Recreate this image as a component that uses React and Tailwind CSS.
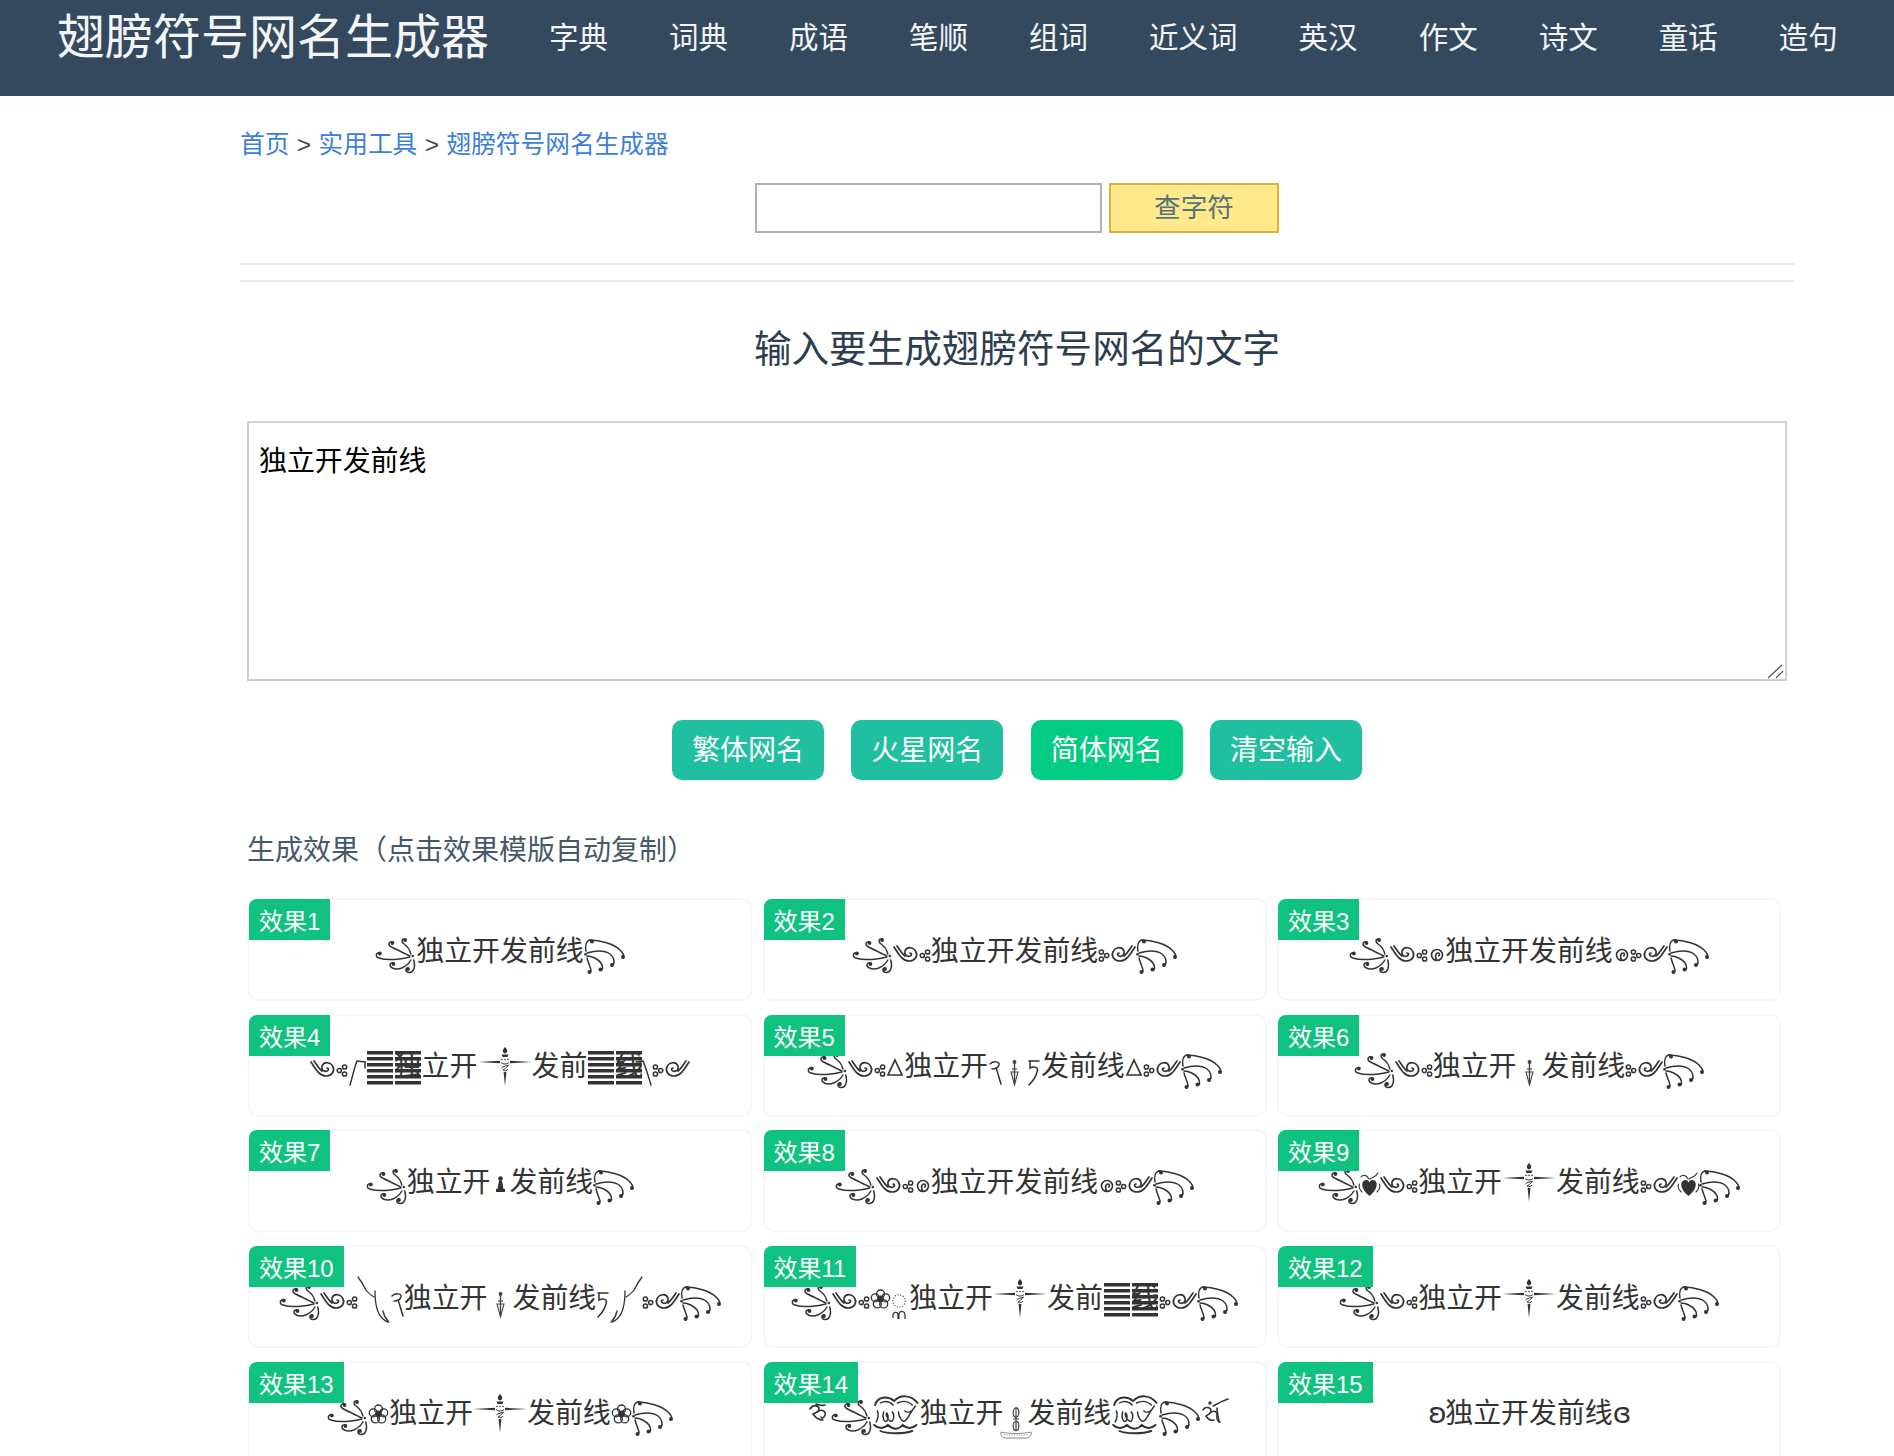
const navItems = ["字典", "词典", "成语", "笔顺", "组词", "近义词", "英汉", "作文", "诗文", "童话", "造句"];

const Wing = () => (
  <g fill="none" stroke="#333" strokeWidth="1.5" strokeLinecap="round" transform="scale(0.97 1)">
    <path d="M6 1 C2 0 1 5 5 6 C14 9 28 7 37 5" />
    <path d="M19 -10 C15 -11 14 -7 18 -5 C24 -2 31 1 37 4" />
    <path d="M32 -13 C28 -13 28 -10 31 -8 C34 -6 37 -2 38 2" />
    <path d="M38 8 C34 15 25 19 19 16 C15 14 16 10 20 11" />
    <path d="M41 8 C43 15 41 21 36 20.5 C32 20 32 16 35 16" />
    <g fill="#333" stroke="none">
      <circle cx="6" cy="1.5" r="2" />
      <circle cx="19" cy="-9" r="2" />
      <circle cx="32" cy="-12" r="2" />
      <circle cx="20" cy="12" r="2" />
      <circle cx="35" cy="17" r="2" />
      <circle cx="40" cy="4" r="1.3" />
    </g>
  </g>
);

// the right wing is not a mirror of the left one: its long stroke arches over the top
const WingR = () => (
  <g fill="none" stroke="#333" strokeWidth="1.5" strokeLinecap="round">
    <path d="M2 -1 C1 -6 2 -11 6 -12 C8 -12.5 9 -11 8 -10" />
    <path d="M6 -12 C16 -12 30 -8 36 -2 C39 1 41 4 39 6" />
    <path d="M3 1 C10 -1 20 -2 26 2 C30 5 31 10 29 13" />
    <path d="M3 4 C8 4 14 7 17 11 C19 14 19 18 17 18" />
    <path d="M3 6 C4 10 6 14 7 18 C7 20 6 21 5 20" />
    <g fill="#333" stroke="none">
      <circle cx="8" cy="-10.5" r="2" />
      <circle cx="39" cy="5" r="2" />
      <circle cx="28" cy="13" r="2" />
      <circle cx="16.5" cy="17.5" r="2" />
      <circle cx="5.5" cy="20" r="2" />
      <circle cx="1.5" cy="2.3" r="1.3" />
    </g>
  </g>
);

const Swirl = () => (
  <g fill="none" stroke="#333" strokeWidth="1.7" strokeLinecap="round">
    <path d="M1 -5 C5 1 9 9 16 9 C22 9 25 4 23 0 C21 -5 14 -6 12 -1 C11 3 14 5 17 4 C19 3 19 1 17 1" />
    <path d="M4 -6 C7 -2 9 2 12 4" />
  </g>
);

const Dots = () => (
  <g fill="none" stroke="#333" strokeWidth="1.5">
    <circle cx="3.3" cy="3.5" r="2.1" />
    <circle cx="8.6" cy="0" r="2.1" />
    <circle cx="8.6" cy="7" r="2.1" />
  </g>
);

const Ring = () => (
  <g fill="none" stroke="#333" strokeWidth="1.6">
    <circle cx="9" cy="3" r="5.5" />
    <path d="M9 8.5 C7 6 7 1 10 1 C12 1 12 4 10 4" />
  </g>
);

const Cross = () => (
  <g fill="#333" stroke="none">
    <path d="M0 -5 L22 -6.2 L22 -3.8 Z" />
    <path d="M54 -5 L32 -6.2 L32 -3.8 Z" />
    <path d="M25.6 5 L27 19 L28.4 5 Z" />
    <path d="M27 -20 C29.5 -17 30.5 -15 27 -13.5 C23.5 -15 24.5 -17 27 -20 Z" />
    <path d="M23.5 -12.5 H30.5 L29.5 -10 H24.5 Z" />
    <circle cx="24" cy="-7.5" r="0.8" />
    <circle cx="27" cy="-7.5" r="0.8" />
    <circle cx="30" cy="-7.5" r="0.8" />
    <g fill="none" stroke="#333" strokeWidth="1">
      <path d="M23 -4.5 C25 -2.5 29 -2.5 31 -4.5" />
      <path d="M23.5 1 C25 -1 29 -1 30.5 -2 C28 1 26 3 25 3 C27 4.5 29 3.5 30 2" />
    </g>
  </g>
);

const Dagger = () => (
  <g fill="none" stroke="#444" strokeWidth="1.1">
    <circle cx="12.5" cy="-5" r="1.4" fill="#444" />
    <path d="M12.5 -4 V17" strokeWidth="1.4" />
    <path d="M9 5 H16 L12.5 18 Z" />
    <path d="M10 2 H15" />
  </g>
);

const Hex = () => (
  <g fill="#333">
    <rect x="1" y="-16" width="26" height="3.5" />
    <rect x="1" y="-10" width="26" height="3.5" />
    <rect x="1" y="-4" width="26" height="3.5" />
    <rect x="1" y="2" width="26" height="3.5" />
    <rect x="1" y="8" width="26" height="3.5" />
    <rect x="1" y="14" width="26" height="3.5" />
  </g>
);

const HookA = () => (
  <g fill="none" stroke="#333" strokeWidth="1.5" strokeLinecap="round">
    <path d="M17 -5 L9 -6 C7 -2 5 8 2 18" />
    <path d="M17 -5 L17 1" />
  </g>
);

const HookAR = () => (
  <g fill="none" stroke="#333" strokeWidth="1.5" strokeLinecap="round">
    <path d="M-7 -5 L0 -6 C2 -2 5 8 8 18" />
  </g>
);

const HookB = () => (
  <g fill="none" stroke="#333" strokeWidth="1.5" strokeLinecap="round">
    <path d="M2 -3 C5 -6 12 -6 11 -2 C10 1 7 2 4 2" />
    <path d="M8 1 C10 6 11 11 13 17" />
  </g>
);

const HookC = () => (
  <g fill="none" stroke="#333" strokeWidth="1.5" strokeLinecap="round">
    <path d="M2 -6 H12" />
    <path d="M3 -6 V1 C7 -1 12 0 10 5 C9 9 6 14 2 18" />
  </g>
);

const LongCurve = () => (
  <g fill="none" stroke="#333" strokeWidth="1.3" strokeLinecap="round">
    <path d="M0 -22 C3 -18 6 -13 8 -9 C10 -6 13 -4 16 -2" />
    <path d="M17 -8 C17 2 19 14 24 19 C27 22 29 23 31 23" />
    <path d="M25 12 C26 17 28 20 30 22" />
  </g>
);

const Tri = () => <path d="M9 -7 L16 8 H2 Z" fill="none" stroke="#333" strokeWidth="1.7" />;

const Flower = () => (
  <g fill="none" stroke="#333" strokeWidth="1.3">
    <circle cx="10.5" cy="-5" r="4" />
    <circle cx="15.7" cy="-1.2" r="4" />
    <circle cx="13.7" cy="4.9" r="4" />
    <circle cx="7.3" cy="4.9" r="4" />
    <circle cx="5.3" cy="-1.2" r="4" />
    <circle cx="10.5" cy="0" r="2.8" fill="#333" />
  </g>
);

const Heart = () => (
  <g>
    <path d="M10.5 13 C3 7 2 1 4.5 -2 C7 -4 10.5 -3 10.5 0 C10.5 -3 14 -4 16.5 -2 C19 1 18 7 10.5 13 Z" fill="#333" />
    <g fill="none" stroke="#333" strokeWidth="1.1" strokeLinecap="round">
      <path d="M2 -6 C4 -9 8 -8 10 -4" />
      <path d="M19 -10 C17 -6 14 -6 11 -4" />
      <path d="M0.5 1 C-0.5 4 1 7 3 9" />
      <path d="M20.5 1 C21.5 4 20 7 18 9" />
    </g>
  </g>
);

const Pawn = () => (
  <g fill="#333">
    <circle cx="9.5" cy="-4.5" r="2.3" />
    <path d="M8 -2.5 H11 L12.5 6 H6.5 Z" />
    <rect x="5" y="6" width="9" height="3" />
  </g>
);

const DottedRing = () => (
  <g fill="none" stroke="#333">
    <circle cx="8" cy="2" r="6.2" strokeWidth="1.1" strokeDasharray="1 1.7" />
    <path d="M2 19 C1 12 7 12 7 16 V20 M8 20 V15 C9 11 14 12 14 16 V20" strokeWidth="1.2" />
  </g>
);

const Cloud = () => (
  <g fill="none" stroke="#333" strokeWidth="1.4" strokeLinecap="round" transform="scale(1.06 1)">
    <path d="M3 -9 C5 -17 14 -19 21 -13 C27 -20 37 -19 43 -11" strokeWidth="1.9" />
    <path d="M8 -11 C13 -14 17 -12 20 -9 M24 -11 C30 -14 34 -13 38 -9" />
    <path d="M5 -3 C7 0 5 6 4 8" />
    <path d="M11 -2 C9 4 12 9 14 7 C16 4 15 0 14 -1 C12 1 17 9 19 7 C21 5 21 -1 19 -2" />
    <path d="M25 -2 C25 3 29 9 31 7 C34 5 36 -2 41 -8" />
    <path d="M31 -3 C33 -1 36 -2 37 -3" />
    <path d="M2 11 C6 15 11 15 15 11 C20 16 25 16 29 11 C33 15 38 15 42 11" strokeWidth="1.9" />
    <path d="M8 17 C14 20 30 20 38 17" strokeWidth="1.9" />
  </g>
);

const Vajra = () => (
  <g transform="translate(-1 0)">
    <g fill="none" stroke="#444" strokeWidth="1.2">
      <ellipse cx="13" cy="-1.5" rx="2.8" ry="4.7" />
      <ellipse cx="13" cy="12" rx="2.8" ry="4.7" />
      <path d="M13 -7 V17 M10 5 H16" />
    </g>
    <path d="M-2 18 C4 20 22 20 28 18 C29 20 27 24 24 24 H2 C-1 24 -3 20 -2 18 Z" fill="none" stroke="#888" strokeWidth="1" />
    <path d="M1 21 H25" stroke="#888" strokeWidth="1" strokeDasharray="1 1.5" />
  </g>
);

const OmLeft = () => (
  <g fill="none" stroke="#333" strokeWidth="1.6" strokeLinecap="round">
    <path d="M2 -5 C5 -10 11 -9 11 -5 C11 -2 7 -1 5 0 C7 3 10 6 15 6" />
    <path d="M9 -2 C12 -5 18 -4 17 1 C16 4 14 5 13 3" />
    <path d="M8 -10 C11 -9 14 -8 17 -9" />
  </g>
);

const OmRight = () => (
  <g fill="none" stroke="#333" strokeWidth="1.6" strokeLinecap="round">
    <path d="M2 -4 C4 -8 10 -7 10 -3 C10 0 6 1 5 2 C7 5 10 7 13 6" />
    <path d="M9 -1 C12 -4 17 -3 16 2 C15 7 19 8 19 8" />
    <path d="M12 -8 C16 -10 21 -13 27 -15" />
    <circle cx="9" cy="-11" r="1.7" fill="#333" stroke="none" />
    <path d="M16 -6 C16 -2 17 2 18 8" />
  </g>
);

const ornaments = {
  gap: [8, () => null],
  wing: [42, Wing],
  wingR: [42, WingR],
  swirl: [26, Swirl],
  dots: [12, Dots],
  ring: [17, Ring],
  cross: [54, Cross],
  dagger: [25, Dagger],
  hex: [28, Hex],
  hookA: [18, HookA],
  hookAR: [9, HookAR],
  hookB: [14, HookB],
  hookC: [14, HookC],
  long: [32, LongCurve],
  tri: [18, Tri],
  flower: [21, Flower],
  heart: [21, Heart],
  pawn: [19, Pawn],
  dotted: [18, DottedRing],
  cloud: [48, Cloud],
  vajra: [24, Vajra],
  omL: [22, OmLeft],
  omR: [28, OmRight],
};

// "name" draws an ornament, "name!" draws it mirrored, "^字" puts bars over a character,
// anything else is plain text
const effects = [
  ["wing", "独立开发前线", "wingR"],
  ["wing", "swirl", "dots", "独立开发前线", "dots!", "swirl!", "wingR"],
  ["wing", "swirl", "dots", "ring", "独立开发前线", "ring", "dots!", "swirl!", "wingR"],
  ["swirl", "dots", "hookA", "hex", "^独", "立开", "cross", "发前", "hex", "^线", "hookAR", "dots!", "swirl!"],
  ["wing", "swirl", "dots", "tri", "独立开", "hookB", "dagger", "hookC", "发前线", "tri", "dots!", "swirl!", "wingR"],
  ["wing", "swirl", "dots", "独立开", "dagger", "发前线", "dots!", "swirl!", "wingR"],
  ["wing", "独立开", "pawn", "发前线", "wingR"],
  ["wing", "swirl", "dots", "ring", "独立开发前线", "ring", "dots!", "swirl!", "wingR"],
  ["wing", "heart", "swirl", "dots", "独立开", "cross", "发前线", "dots!", "swirl!", "heart", "wingR"],
  ["wing", "swirl", "dots", "long", "hookB", "独立开", "dagger", "发前线", "hookC", "long!", "dots!", "swirl!", "wingR"],
  ["wing", "swirl", "dots", "flower", "dotted", "独立开", "cross", "发前", "hex", "^线", "dots!", "swirl!", "wingR"],
  ["wing", "swirl", "dots", "独立开", "cross", "发前线", "dots!", "swirl!", "wingR"],
  ["wing", "flower", "独立开", "cross", "发前线", "flower", "wingR"],
  ["gap", "omL", "wing", "cloud", "独立开", "vajra", "发前线", "cloud", "wingR", "omR"],
  ["ʚ", "独立开发前线", "ɞ"],
];

function Ornament({ name }) {
  const flip = name.endsWith("!");
  const [w, Draw] = ornaments[flip ? name.slice(0, -1) : name];
  return (
    <svg
      width={w}
      height="48"
      viewBox={`0 -24 ${w} 48`}
      className={flip ? "shrink-0 overflow-visible -scale-x-100" : "shrink-0 overflow-visible"}
    >
      <Draw />
    </svg>
  );
}

function Token({ token }) {
  const name = token.replace("!", "");
  if (ornaments[name]) return <Ornament name={token} />;
  if (token.startsWith("^")) {
    return (
      <span className="relative">
        {token.slice(1)}
        <svg width="28" height="48" viewBox="0 -24 28 48" className="absolute left-0 top-1/2 -translate-y-1/2 overflow-visible">
          <Hex />
        </svg>
      </span>
    );
  }
  if (token === "ʚ" || token === "ɞ") {
    return <span className="w-[17px] text-center font-['DejaVu_Sans',sans-serif]">{token}</span>;
  }
  return <span>{token}</span>;
}

function EffectCard({ index, tokens }) {
  return (
    <div className="relative flex h-[103px] items-center justify-center rounded-[10px] border-2 border-[#f6f6f6] bg-white pt-[4px] text-[27.9px] leading-[48px] text-[#333]">
      <div className="absolute -left-[1px] -top-[1px] h-[41px] rounded-tl-[8px] bg-[#10c27f] px-[10px] text-[24px] leading-[45px] text-white">
        效果{index + 1}
      </div>
      {tokens.map((token, i) => (
        <Token key={i} token={token} />
      ))}
    </div>
  );
}

export default function App() {
  return (
    <div className="h-[1456px] overflow-hidden bg-white font-['Liberation_Sans','Noto_Sans_CJK_SC',sans-serif]">
      <header className="flex h-24 items-center bg-[#35495e] pb-[20px] pl-[57px] text-[#f3f5f7]">
        <a className="text-[48px] leading-[60px]">翅膀符号网名生成器</a>
        <nav className="ml-[60px] flex gap-[61px] text-[29.5px] leading-[40px]">
          {navItems.map((item) => (
            <a key={item}>{item}</a>
          ))}
        </nav>
      </header>

      <main className="ml-[240px] mr-[100px]">
        <div className="pt-[34px] text-[24.7px] leading-[30px] text-[#4a4a4a]">
          <a className="text-[#3d7edb]">首页</a> <span className="mx-[0.5px]">&gt;</span>{" "}
          <a className="text-[#3d7edb]">实用工具</a> <span className="mx-[0.5px]">&gt;</span>{" "}
          <a className="text-[#3d7edb]">翅膀符号网名生成器</a>
        </div>

        <div className="mt-[23px] flex justify-center gap-[7px]">
          <input className="h-[50px] w-[347px] border-2 border-[#a9b5b5] bg-white" />
          <button className="h-[50px] w-[170px] border-2 border-[#dcb23f] bg-[#ffe98a] pt-[2px] text-[26.6px] text-[#56737c]">
            查字符
          </button>
        </div>

        <div className="mt-[30px] h-[2px] bg-[#e8e8e8]" />
        <div className="mt-[15px] h-[2px] bg-[#e8e8e8]" />

        <h1 className="mt-[42px] text-center text-[37.6px] leading-[50px] text-[#2c3e50]">
          输入要生成翅膀符号网名的文字
        </h1>

        <div className="relative mt-[47px] ml-[7px] h-[260px] w-[1540px]">
          <textarea
            className="block h-full w-full resize-none border-2 border-[#d2d2d2] bg-white px-[10px] py-[21px] text-[27.9px] leading-[36px] text-black outline-none"
            defaultValue="独立开发前线"
          />
          <svg width="18" height="16" viewBox="0 0 18 16" className="absolute bottom-[2px] right-[2px]">
            <path d="M1 15 L15 2 M9 15 L16 8" stroke="#555" strokeWidth="1.2" fill="none" />
          </svg>
        </div>

        <div className="mt-[39px] flex justify-center gap-[27.4px] text-[28px] text-white">
          <button className="h-[60px] w-[152px] rounded-[10px] bg-[#1fbf9f] pt-[2px]">繁体网名</button>
          <button className="h-[60px] w-[152px] rounded-[10px] bg-[#1fbf9f] pt-[2px]">火星网名</button>
          <button className="h-[60px] w-[152px] rounded-[10px] bg-[#02cb84] pt-[2px]">简体网名</button>
          <button className="h-[60px] w-[152px] rounded-[10px] bg-[#1fbf9f] pt-[2px]">清空输入</button>
        </div>

        <h2 className="mt-[51px] ml-[7px] text-[28px] leading-[40px] text-[#46596b]">
          生成效果（点击效果模版自动复制）
        </h2>

        <div className="mt-[27px] ml-[8px] grid w-[1533px] grid-cols-3 gap-x-[10.5px] gap-y-[12.7px]">
          {effects.map((tokens, i) => (
            <EffectCard key={i} index={i} tokens={tokens} />
          ))}
        </div>
      </main>
    </div>
  );
}
